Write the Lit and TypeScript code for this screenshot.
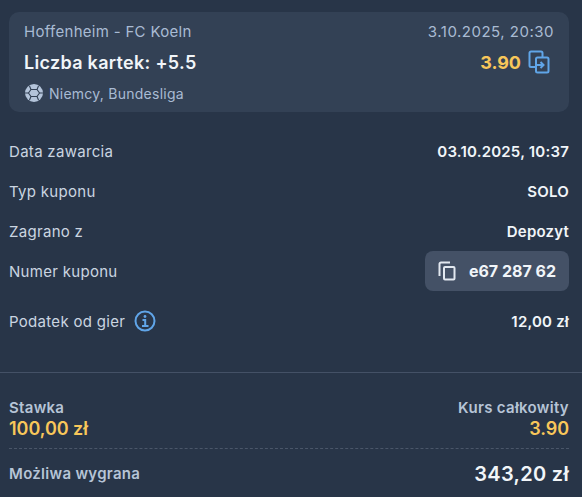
import { LitElement, html, css } from 'lit'
import { customElement } from 'lit/decorators.js'

@customElement('app-root')
export class AppRoot extends LitElement {
  static styles = css`
    :host {
      display: block;
      width: 582px;
      height: 497px;
      overflow: hidden;
      background: #283548;
      font-family: Inter, 'Noto Sans', sans-serif;
      color: #f1f5f9;
      letter-spacing: 0.3px;
    }
    .card {
      margin: 12px 13px 0 9px;
      height: 100px;
      box-sizing: border-box;
      padding: 9px 15px 0;
      border-radius: 10px;
      background: #334155;
    }
    .line {
      display: flex;
      justify-content: space-between;
      align-items: center;
    }
    .match {
      height: 20px;
      font-size: 15px;
      color: #a9bbd3;
    }
    .date {
      letter-spacing: 0.5px;
    }
    .pick {
      height: 42px;
      font-size: 18px;
      font-weight: 600;
    }
    .odds {
      display: flex;
      align-items: center;
      gap: 7px;
      margin-right: 4px;
      font-weight: 700;
      letter-spacing: 0;
      color: #f8c75a;
    }
    .league {
      display: flex;
      align-items: center;
      gap: 5px;
      height: 20px;
      font-size: 14px;
      letter-spacing: 0.25px;
      color: #a9bbd3;
    }
    .details {
      margin: 19px 13px 0 9px;
    }
    .row {
      display: flex;
      justify-content: space-between;
      align-items: center;
      height: 40px;
      font-size: 15px;
      color: #cbd5e1;
    }
    .row b {
      font-weight: 600;
      letter-spacing: 0.2px;
      color: #f1f5f9;
    }
    .row.tax {
      height: 60px;
    }
    .label {
      display: flex;
      align-items: center;
      gap: 9px;
    }
    .coupon {
      display: flex;
      align-items: center;
      gap: 13px;
      height: 40px;
      box-sizing: border-box;
      padding: 0 13px;
      border-radius: 8px;
      background: #445166;
      font-size: 16px;
      font-weight: 700;
      letter-spacing: 0;
      color: #f1f5f9;
    }
    .divider {
      height: 1px;
      margin-top: 21px;
      background: #445166;
    }
    .summary {
      margin: 25px 13px 0 9px;
    }
    .stake {
      display: flex;
      justify-content: space-between;
      height: 41px;
      padding-bottom: 9px;
      border-bottom: 1px dashed #4a5669;
    }
    .col {
      display: flex;
      flex-direction: column;
    }
    .col.end {
      align-items: flex-end;
    }
    .small {
      height: 20px;
      line-height: 20px;
      font-size: 15px;
      font-weight: 600;
      color: #b6c4d6;
    }
    .amount {
      height: 21px;
      line-height: 21px;
      font-size: 18px;
      font-weight: 600;
      letter-spacing: -0.05px;
      color: #f8c75a;
    }
    .win {
      display: flex;
      justify-content: space-between;
      align-items: center;
      height: 50px;
    }
    .win .value {
      font-size: 20px;
      font-weight: 600;
      letter-spacing: 0.3px;
    }
    svg {
      display: block;
      flex: none;
    }
  `

  render () {
    return html`
      <div class="card">
        <div class="line match"><span>Hoffenheim - FC Koeln</span><span class="date">3.10.2025, 20:30</span></div>
        <div class="line pick">
          <span>Liczba kartek: +5.5</span>
          <span class="odds">3.90
            <svg width="22" height="24" viewBox="0 0 22 24" fill="none" stroke="#60a5e8" stroke-width="2">
              <path d="M8 17H3a1.500 1.500 0 0 1-1.500-1.500V3A1.500 1.500 0 0 1 3 1.500h10A1.500 1.500 0 0 1 14.500 3v4"/>
              <rect x="8" y="7.500" width="12.500" height="15" rx="1.500"/>
              <path d="M9 15h6M12.500 12l3 3-3 3"/>
            </svg>
          </span>
        </div>
        <div class="league">
          <svg width="20" height="20" viewBox="0 0 20 20">
            <circle cx="10" cy="10" r="9" fill="#b4c4da"/>
            <g stroke="#334155" stroke-width="1.100" fill="none">
              <path d="M7 6.500h6l2.500 3.500-2.500 3.500H7L4.500 10z"/>
              <path d="M7 6.500L5.500 3M13 6.500L14.500 3M15.500 10H19M13 13.500l1.500 3.500M7 13.500L5.500 17M4.500 10H1"/>
            </g>
          </svg>
          Niemcy, Bundesliga
        </div>
      </div>

      <div class="details">
        <div class="row"><span>Data zawarcia</span><b>03.10.2025, 10:37</b></div>
        <div class="row"><span>Typ kuponu</span><b>SOLO</b></div>
        <div class="row"><span>Zagrano z</span><b>Depozyt</b></div>
        <div class="row">
          <span>Numer kuponu</span>
          <div class="coupon">
            <svg width="18" height="20" viewBox="0 0 18 20" fill="none" stroke="#e2e8f0" stroke-width="2">
              <path d="M1.500 15V3A1.500 1.500 0 0 1 3 1.500h9"/>
              <rect x="6" y="6" width="10.500" height="12.500" rx="1"/>
            </svg>
            e67 287 62
          </div>
        </div>
        <div class="row tax">
          <span class="label">Podatek od gier
            <svg width="22" height="22" viewBox="0 0 22 22" fill="none" stroke="#60a5e8" stroke-width="2">
              <circle cx="11" cy="11" r="9.500"/>
              <path d="M8.500 10h2.700v6M8 16h6.500" />
              <circle cx="11" cy="6.500" r="1.400" fill="#60a5e8" stroke="none"/>
            </svg>
          </span>
          <b>12,00 zł</b>
        </div>
      </div>

      <div class="divider"></div>

      <div class="summary">
        <div class="stake">
          <div class="col"><span class="small">Stawka</span><span class="amount">100,00 zł</span></div>
          <div class="col end"><span class="small">Kurs całkowity</span><span class="amount">3.90</span></div>
        </div>
        <div class="win"><span class="small">Możliwa wygrana</span><span class="value">343,20 zł</span></div>
      </div>
    `
  }
}
